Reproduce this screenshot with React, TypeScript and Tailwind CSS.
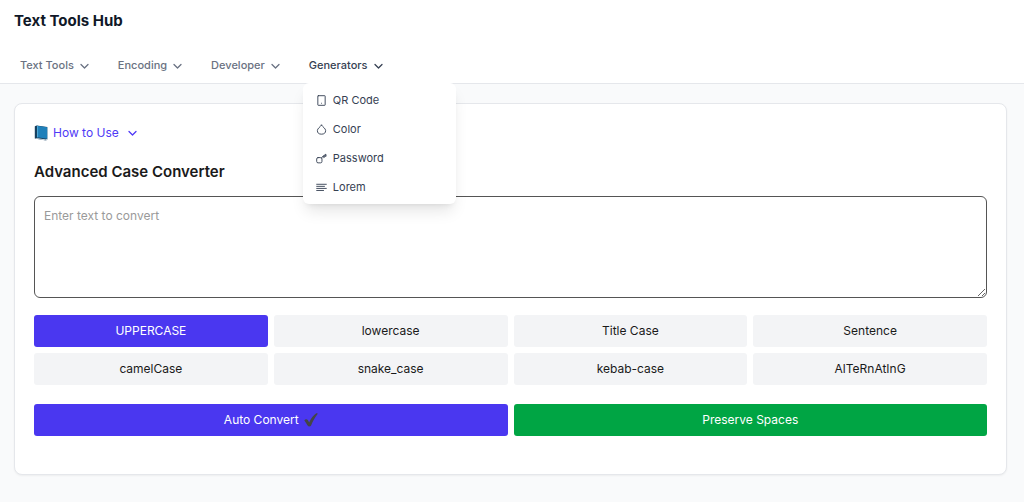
import { useState } from 'react';
import type { ReactNode } from 'react';
import clsx from 'clsx';

/* ------------------------------------------------------------------ */
/*  Data                                                               */
/* ------------------------------------------------------------------ */

const menus = ['Text Tools', 'Encoding', 'Developer', 'Generators'];

const generators: { label: string; icon: ReactNode }[] = [
  { label: 'QR Code', icon: <path d="M5 1.500h14a1 1 0 011 1v19a1 1 0 01-1 1H5a1 1 0 01-1-1v-19a1 1 0 011-1zM12 18h.01" /> },
  { label: 'Color', icon: <path d="M12 2.500C9.500 6 3 10 3 14.200a9 8 0 0018 0C21 10 14.500 6 12 2.500z" /> },
  {
    label: 'Password',
    icon: (
      <>
        <rect x="1.500" y="10" width="11.500" height="11.500" rx="3" />
        <path d="M12 11l3.500-4.500H22M17.500 9.500l4-3V2.500l-4 3z" />
      </>
    ),
  },
  { label: 'Lorem', icon: <path d="M1.500 5h21M1.500 9.500h17M1.500 14h21M1.500 18.500h15" /> },
];

const cases = [
  'UPPERCASE',
  'lowercase',
  'Title Case',
  'Sentence',
  'camelCase',
  'snake_case',
  'kebab-case',
  'AlTeRnAtInG',
];

/* ------------------------------------------------------------------ */
/*  Icons                                                              */
/* ------------------------------------------------------------------ */

function Icon({ children }: { children: ReactNode }) {
  return (
    <svg
      viewBox="0 0 24 24"
      className="h-[11px] w-[11px] shrink-0"
      fill="none"
      stroke="currentColor"
      strokeWidth={2}
      strokeLinecap="round"
      strokeLinejoin="round"
      aria-hidden="true"
    >
      {children}
    </svg>
  );
}

function Chevron() {
  return (
    <svg
      viewBox="0 0 12 12"
      className="h-3 w-3 shrink-0"
      fill="none"
      stroke="currentColor"
      strokeWidth={1.3}
      strokeLinecap="round"
      strokeLinejoin="round"
      aria-hidden="true"
    >
      <path d="M2 4.500L5.500 8 9 4.500" />
    </svg>
  );
}

function Book() {
  return (
    <svg viewBox="0 0 14 16" className="h-4 w-[14px] shrink-0" aria-hidden="true">
      <path d="M.8 1.200L2.700.4l10.600 1.500v12.600l-1.300 1.100L.8 13.600z" fill="#17405f" />
      <path d="M2 13l10 1.600 1-.8v1L12 15.400 1.500 13.600z" fill="#e3e9ee" />
      <path d="M3 .8l10.200 1.500v11.500L3 12.300z" fill="#1f80ba" />
      <path d="M3 .8l1.100.2v11.500L3 12.300z" fill="#4ba6d4" />
    </svg>
  );
}

function Check() {
  return (
    <svg viewBox="0 0 14 14" className="h-[14px] w-[14px] shrink-0" aria-hidden="true">
      <path
        d="M.3 7.300C1.200 5.800 3 5.800 3.800 7.100l1.400 2.300C7 5.500 9.300 2.300 12.300.3c.9-.4 1.800.1 1.300.8C11 4.600 9 8 7.200 12.200c-.5 1.500-2.900 1.600-3.600.2z"
        fill="#444547"
      />
    </svg>
  );
}

/* ------------------------------------------------------------------ */
/*  Header                                                             */
/* ------------------------------------------------------------------ */

function Header() {
  const [open, setOpen] = useState<string | null>('Generators');

  return (
    <header className="border-b border-gray-200 bg-white">
      <div className="px-[14px] pt-[9px]">
        <h1 className="text-[15px] leading-6 font-bold text-gray-900">Text Tools Hub</h1>
      </div>
      <nav className="mt-[15px] flex gap-[15px] px-[14px]">
        {menus.map((menu) => (
          <div key={menu} className="relative">
            <button
              type="button"
              aria-expanded={open === menu}
              onClick={() => setOpen(open === menu ? null : menu)}
              className={clsx(
                'flex h-[35px] items-center gap-[5px] px-[6px] text-[11px] font-medium',
                open === menu ? 'text-gray-700' : 'text-gray-500',
              )}
            >
              {menu}
              <Chevron />
            </button>

            {open === menu && (
              <ul className="absolute top-full left-0 z-10 w-[153px] rounded-md bg-white pt-[3px] pb-[2px] shadow-lg">
                {generators.map(({ label, icon }) => (
                  <li key={label}>
                    <a
                      href="#"
                      className="flex h-[29px] items-center gap-[6px] px-[13px] text-[11px] text-gray-700"
                    >
                      <Icon>{icon}</Icon>
                      {label}
                    </a>
                  </li>
                ))}
              </ul>
            )}
          </div>
        ))}
      </nav>
    </header>
  );
}

/* ------------------------------------------------------------------ */
/*  Page                                                               */
/* ------------------------------------------------------------------ */

export default function App() {
  const [text, setText] = useState('');
  const [active, setActive] = useState('UPPERCASE');

  return (
    <div className="min-h-screen bg-gray-50 font-['Inter',sans-serif] text-[#1a1a1a]">
      <Header />

      <main className="pt-[19px] pr-[17px] pb-7 pl-[14px]">
        <section className="rounded-lg border border-gray-200 bg-white px-[19px] pt-[18px] pb-[38px] shadow-xs">
          <button type="button" className="flex h-[22px] items-center gap-[5px] text-[12px] text-[#4f39f6]">
            <Book />
            How to Use
            <span className="pl-[3px]">
              <Chevron />
            </span>
          </button>

          <h2 className="mt-4 text-[15px] leading-6 font-semibold">Advanced Case Converter</h2>

          <textarea
            aria-label="Text to convert"
            placeholder="Enter text to convert"
            value={text}
            onChange={(e) => setText(e.target.value)}
            className="mt-3 block h-[102px] w-full rounded-md border border-[#555555] bg-white px-[9px] py-[9px] text-[12px] leading-5 placeholder:text-[#9a9a9a]"
          />

          <div className="mt-[17px] grid grid-cols-4 gap-[6px]">
            {cases.map((name) => (
              <button
                key={name}
                type="button"
                onClick={() => setActive(name)}
                className={clsx(
                  'h-8 rounded-[3px] text-[12px]',
                  active === name ? 'bg-[#4a37f0] text-white' : 'bg-gray-100',
                )}
              >
                {name}
              </button>
            ))}
          </div>

          <div className="mt-[19px] grid grid-cols-2 gap-[6px] text-[12px] text-white">
            <button
              type="button"
              className="flex h-8 items-center justify-center gap-[5px] rounded-[3px] bg-[#4a37f0]"
            >
              Auto Convert
              <Check />
            </button>
            <button type="button" className="h-8 rounded-[3px] bg-[#00a544]">
              Preserve Spaces
            </button>
          </div>
        </section>
      </main>
    </div>
  );
}
